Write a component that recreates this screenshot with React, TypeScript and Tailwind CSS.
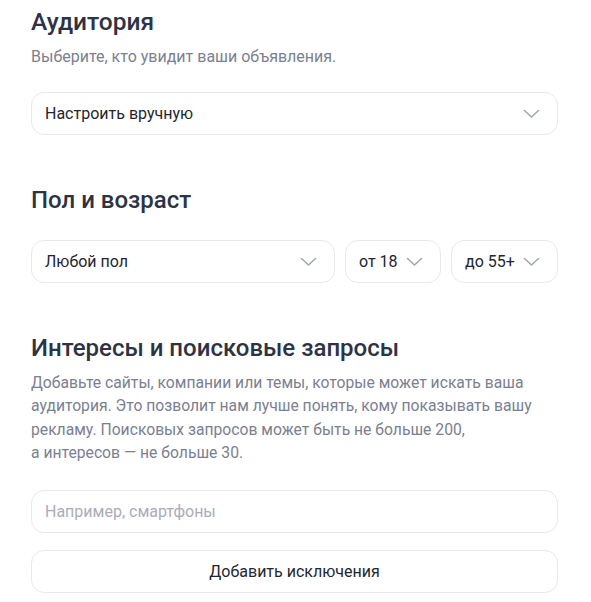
function Chevron() {
  return (
    <svg width="17" height="10" viewBox="0 0 17 10" fill="none" className="shrink-0">
      <path d="M1.5 1.5 L8.5 8 L15.5 1.5" stroke="#a3a7b3" strokeWidth="1.6" strokeLinecap="round" strokeLinejoin="round" />
    </svg>
  )
}

function Select({ label, className }: { label: string; className?: string }) {
  return (
    <div
      className={`flex h-[43px] items-center justify-between rounded-[13px] border border-[#e8e9ee] bg-white pl-[13px] pr-[17px] ${className ?? ''}`}
    >
      <span className="text-[16px] text-[#23262e]">{label}</span>
      <Chevron />
    </div>
  )
}

export default function App() {
  return (
    <div className="min-h-[602px] w-[591px] bg-white pl-[31px] pr-[33px] font-['Roboto',sans-serif]">
      <h1 className="pt-[7px] text-[24.5px] font-medium leading-[30px] text-[#2d3345]">Аудитория</h1>
      <p className="mt-[10px] text-[16px] leading-[20px] text-[#7b8090]">Выберите, кто увидит ваши объявления.</p>
      <Select label="Настроить вручную" className="mt-[25px]" />

      <h2 className="mt-[50px] text-[24px] font-medium leading-[30px] text-[#2d3345]">Пол и возраст</h2>
      <div className="mt-[25px] flex gap-[10px]">
        <Select label="Любой пол" className="flex-1" />
        <Select label="от 18" className="w-[96px] gap-2" />
        <Select label="до 55+" className="w-[107px] gap-2" />
      </div>

      <h2 className="mt-[50px] text-[24px] font-medium leading-[30px] text-[#2d3345]">Интересы и поисковые запросы</h2>
      <p className="mt-[8px] text-[15.7px] leading-[23.3px] text-[#7b8090]">
        Добавьте сайты, компании или темы, которые может искать ваша аудитория. Это позволит нам лучше понять, кому показывать вашу рекламу. Поисковых запросов может быть не больше 200,
        <br />а интересов — не больше 30.
      </p>
      <div className="mt-[26px] flex h-[43px] items-center rounded-[13px] border border-[#e8e9ee] bg-white px-[13px]">
        <span className="text-[16px] text-[#a9adb8]">Например, смартфоны</span>
      </div>
      <div className="mt-[17px] flex h-[43px] items-center justify-center rounded-[13px] border border-[#e8e9ee] bg-white">
        <span className="text-[16px] text-[#23262e]">Добавить исключения</span>
      </div>
    </div>
  )
}
